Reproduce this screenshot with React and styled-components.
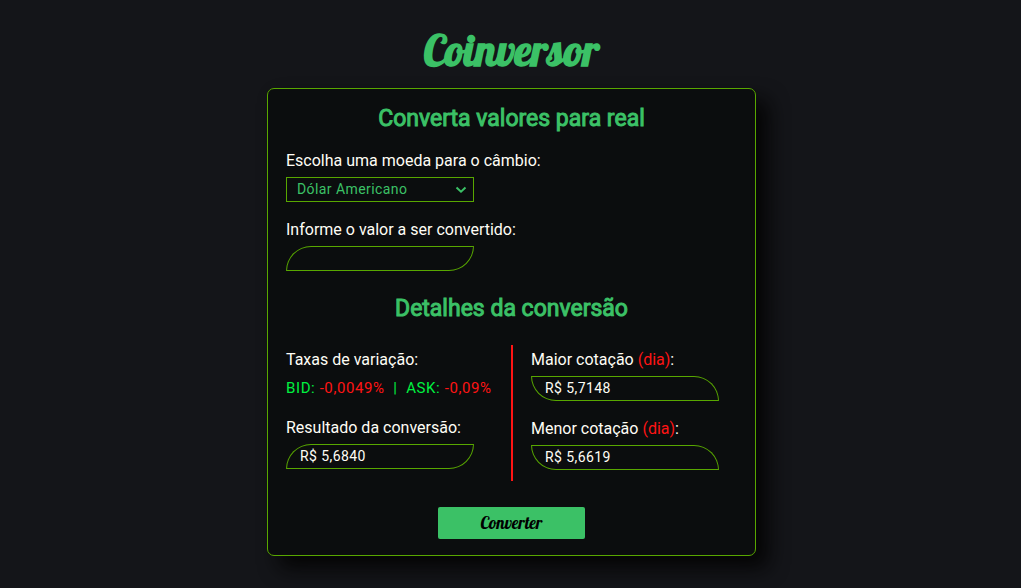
import React, { useState } from "react";
import styled, { createGlobalStyle } from "styled-components";

const GlobalStyle = createGlobalStyle`
  * { box-sizing: border-box; }
  body {
    margin: 0;
    background: #141519;
    color: #fffdf5;
    font-family: Roboto, "Liberation Sans", sans-serif;
  }
`;

const script = `Lobster, "Liberation Serif", serif`;

const Page = styled.main`
  display: flex;
  flex-direction: column;
  align-items: center;
  padding: 20px 16px 32px 18px;
`;

const Logo = styled.h1`
  margin: 0 0 8px;
  color: #3bc166;
  font: 700 43px/60px ${script};
`;

const Card = styled.form`
  width: 100%;
  max-width: 489px;
  padding: 15px 18px 16px;
  border: 1px solid #58a700;
  border-radius: 7px;
  background: #0b0d0e;
  box-shadow: 12px 12px 20px #050505;
`;

const Heading = styled.h2`
  margin: 0;
  color: #3bc166;
  font-size: 23px;
  font-weight: 400;
  line-height: 30px;
  text-align: center;
  -webkit-text-stroke: 1px currentColor;
`;

const Fields = styled.div`
  display: flex;
  flex-direction: column;
  gap: 17px;
  margin: ${({ $block }) => ($block ? "16px 0 23px" : "0")};
`;

const FieldBox = styled.div`
  display: flex;
  flex-direction: column;
  align-items: flex-start;
  gap: 5px;
`;

const Label = styled.label`
  font-size: 16px;
  line-height: 22px;
`;

const Day = styled.span`
  color: #ff1414;
`;

const TextBox = styled.input`
  width: 188px;
  max-width: 100%;
  height: 25px;
  padding: 0 13px 2px;
  border: 1px solid #58a700;
  border-radius: ${({ $flip }) => ($flip ? "0 25px" : "25px 0")};
  background: transparent;
  color: inherit;
  font: 14px Roboto, "Liberation Sans", sans-serif;
  letter-spacing: 0.03em;
  outline: none;
`;

const SelectWrap = styled.div`
  position: relative;
  width: 188px;
  max-width: 100%;
`;

const Select = styled.select`
  display: block;
  width: 100%;
  height: 25px;
  padding: 0 24px 2px 10px;
  appearance: none;
  border: 1px solid #58a700;
  border-radius: 0;
  background: #0b0d0e;
  color: #3bc166;
  font: 14px Roboto, "Liberation Sans", sans-serif;
  letter-spacing: 0.03em;
`;

const Chevron = styled.svg`
  position: absolute;
  top: 9px;
  right: 7px;
  pointer-events: none;
`;

const Details = styled.section`
  display: flex;
  margin: 21px 0 26px;
`;

const Column = styled.div`
  flex: ${({ $side }) => ($side ? "1" : "0 1 225px")};
  min-width: 0;
  padding: 4px 0 11px;
  ${({ $side }) => $side && "padding-left: 18px; border-left: 2px solid #ff1414;"}
`;

const Rates = styled.output`
  color: #00f040;
  font-size: 15px;
  letter-spacing: 0.04em;
  line-height: 24px;
  white-space: pre;
`;

const Rate = styled.span`
  color: #ff1414;
`;

const Submit = styled.button`
  display: block;
  width: 147px;
  height: 32px;
  margin: 0 auto;
  padding: 0 0 2px;
  border: 0;
  border-radius: 2px;
  background: #3bc166;
  color: #000;
  font: 400 17px ${script};
  cursor: pointer;
`;

function Field({ id, label, day, ...rest }) {
  return (
    <FieldBox>
      <Label htmlFor={id}>
        {label}
        {day && <> <Day>(dia)</Day></>}:
      </Label>
      <TextBox id={id} type="text" {...rest} />
    </FieldBox>
  );
}

export default function App() {
  const [amount, setAmount] = useState("");
  return (
    <>
      <GlobalStyle />
      <Page>
        <Logo>Coinversor</Logo>
        <Card onSubmit={(e) => e.preventDefault()}>
          <Heading>Converta valores para real</Heading>
          <Fields $block>
            <FieldBox>
              <Label htmlFor="moeda">Escolha uma moeda para o câmbio:</Label>
              <SelectWrap>
                <Select id="moeda">
                  <option>Dólar Americano</option>
                </Select>
                <Chevron width="12" height="8" viewBox="0 0 12 8" fill="none" stroke="#3bc166" strokeWidth="2" aria-hidden="true">
                  <path d="M1.5 1.5 6 5.7 10.5 1.5" />
                </Chevron>
              </SelectWrap>
            </FieldBox>
            <Field
              id="valor"
              label="Informe o valor a ser convertido"
              value={amount}
              onChange={(e) => setAmount(e.target.value)}
            />
          </Fields>
          <Heading>Detalhes da conversão</Heading>
          <Details>
            <Column>
              <Fields>
                <FieldBox>
                  <Label htmlFor="taxas">Taxas de variação:</Label>
                  <Rates id="taxas">
                    BID: <Rate>-0,0049%</Rate>{"  |  "}ASK: <Rate>-0,09%</Rate>
                  </Rates>
                </FieldBox>
                <Field id="resultado" label="Resultado da conversão" value="R$ 5,6840" readOnly />
              </Fields>
            </Column>
            <Column $side>
              <Fields>
                <Field id="maior" label="Maior cotação" day value="R$ 5,7148" readOnly $flip />
                <Field id="menor" label="Menor cotação" day value="R$ 5,6619" readOnly $flip />
              </Fields>
            </Column>
          </Details>
          <Submit type="submit">Converter</Submit>
        </Card>
      </Page>
    </>
  );
}
